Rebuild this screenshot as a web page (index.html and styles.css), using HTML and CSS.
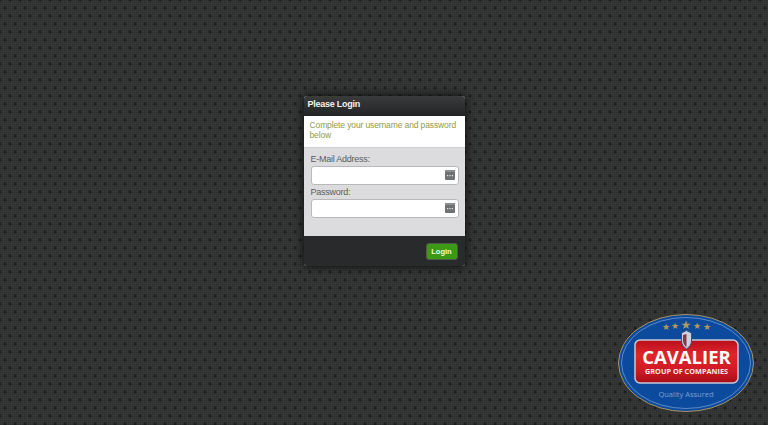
FILE: index.html
```html
<!DOCTYPE html>
<html lang="en">
<head>
<meta charset="utf-8">
<title>Please Login</title>
<link rel="stylesheet" href="styles.css">
</head>
<body>
<main class="page">
  <section class="panel">
    <header class="panel-head">Please Login</header>
    <p class="panel-note">Complete your username and password below</p>
    <form class="panel-form">
      <label class="field-label" for="email">E-Mail Address:</label>
      <div class="field">
        <input class="field-input" id="email" type="text">
        <svg class="field-icon" viewBox="0 0 10 10"><rect width="10" height="10" rx="1" fill="#6f7173"/><rect y="0" width="10" height="2" fill="#8b8d8f"/><rect x="2" y="5" width="1.2" height="1.2" fill="#e8e8e8"/><rect x="4.4" y="5" width="1.2" height="1.2" fill="#e8e8e8"/><rect x="6.8" y="5" width="1.2" height="1.2" fill="#e8e8e8"/></svg>
      </div>
      <label class="field-label" for="password">Password:</label>
      <div class="field">
        <input class="field-input" id="password" type="password">
        <svg class="field-icon" viewBox="0 0 10 10"><rect width="10" height="10" rx="1" fill="#6f7173"/><rect y="0" width="10" height="2" fill="#8b8d8f"/><rect x="2" y="5" width="1.2" height="1.2" fill="#e8e8e8"/><rect x="4.4" y="5" width="1.2" height="1.2" fill="#e8e8e8"/><rect x="6.8" y="5" width="1.2" height="1.2" fill="#e8e8e8"/></svg>
      </div>
    </form>
    <footer class="panel-foot"><button class="login" type="button">Login</button></footer>
  </section>
</main>
<svg class="badge" viewBox="0 0 138 100">
  <defs>
    <linearGradient id="red" x1="0" y1="0" x2="0" y2="1"><stop offset="0" stop-color="#b80f1c"/><stop offset="0.35" stop-color="#e0252c"/><stop offset="0.7" stop-color="#d01a24"/><stop offset="1" stop-color="#a80d18"/></linearGradient>
  </defs>
  <ellipse cx="68" cy="49" rx="67.500" ry="48.500" fill="#0c4a9e" stroke="#a8935f" stroke-width="1"/>
  <ellipse cx="68" cy="49" rx="64.500" ry="45.500" fill="none" stroke="#7ea6d8" stroke-width="0.700"/>
  <g fill="#b39a5c" font-family="'DejaVu Sans',sans-serif" text-anchor="middle">
    <text x="48" y="16" font-size="9">★</text>
    <text x="57" y="14.500" font-size="9">★</text>
    <text x="68" y="15" font-size="12">★</text>
    <text x="79" y="14.500" font-size="9">★</text>
    <text x="89" y="16" font-size="9">★</text>
  </g>
  <rect x="17" y="26" width="103" height="43" rx="5" fill="url(#red)" stroke="#c5ccd6" stroke-width="1.500"/>
  <path d="M63.500 19l5-2.500 5 2.500v8c0 3-2 6-5 8-3-2-5-5-5-8z" fill="#c9d2e0" stroke="#3d4f74" stroke-width="1"/>
  <path d="M68.500 20v13c-2-1.500-3.500-4-3.500-6v-6z" fill="#8c3448"/>
  <text class="badge-name" x="68.500" y="49.500" text-anchor="middle">CAVALIER</text>
  <text class="badge-sub" x="68.500" y="59.500" text-anchor="middle">GROUP OF COMPANIES</text>
  <text class="badge-tag" x="68" y="83" text-anchor="middle">Quality Assured</text>
</svg>
</body>
</html>
```
FILE: styles.css
```css
* { box-sizing: border-box; }
html, body { height: 100%; }
body {
  margin: 0;
  overflow: hidden;
  position: relative;
  font-family: "Liberation Sans", Arial, sans-serif;
  background-color: #383a39;
  background-image:
    radial-gradient(circle at 50% 50%, #1c1d1d 0, #1c1d1d 1.2px, transparent 1.8px),
    radial-gradient(circle at 50% 50%, #1c1d1d 0, #1c1d1d 1.2px, transparent 1.8px),
    repeating-linear-gradient(0deg, rgba(0,0,0,.09) 0 1px, transparent 1px 2px),
    repeating-linear-gradient(90deg, rgba(0,0,0,.09) 0 1px, transparent 1px 2px);
  background-size: 10px 16px, 10px 16px, auto, auto;
  background-position: 0 0, 5px 8px, 0 0, 0 0;
}
.page { display: flex; justify-content: center; padding-top: 96px; }
.panel {
  width: 161px;
  height: 170px;
  display: flex;
  flex-direction: column;
  background: #dcdcde;
  border-radius: 3px;
  box-shadow: 0 0 10px rgba(0,0,0,.85);
  overflow: hidden;
}
.panel-head {
  height: 20px;
  padding: 1px 4px;
  font-size: 9px;
  letter-spacing: -.25px;
  line-height: 15px;
  font-weight: 700;
  color: #f2f2f2;
  background: linear-gradient(#3a3b3c, #232425);
}
.panel-note {
  margin: 0;
  height: 32px;
  padding: 4px 4px 4px 6px;
  font-size: 8.500px;
  letter-spacing: -.12px;
  line-height: 10px;
  color: #8f9a4c;
  background: #fff;
  border-bottom: 1px solid #cfcfcf;
}
.panel-form { flex: 1; padding: 4px 6px 0 7px; }
.field-label { display: block; font-size: 9px; letter-spacing: -.25px; line-height: 14px; color: #5c5c5c; }
.field { position: relative; height: 19px; }
.field-input {
  display: block;
  width: 100%;
  height: 100%;
  border: 1px solid #b9b9b9;
  border-radius: 3px;
  background: #fff;
  outline: 0;
}
.field-icon { position: absolute; right: 4px; top: 4px; width: 10px; height: 10px; }
.panel-foot {
  height: 30px;
  display: flex;
  justify-content: flex-end;
  align-items: center;
  padding-right: 7px;
  background: #292a2b;
}
.login {
  width: 32px;
  height: 17px;
  padding: 0;
  border: 1px solid #4f5a4c;
  border-radius: 3px;
  background: #3a9a14;
  color: #f4f9e8;
  font: 700 7.500px "Liberation Sans", Arial, sans-serif;
}
.badge { position: absolute; left: 618px; top: 314px; width: 138px; height: 100px; }
.badge-name { font: 700 18.500px "Open Sans", "Liberation Sans", sans-serif; fill: #fff; }
.badge-sub { font: 700 7.300px "Open Sans", "Liberation Sans", sans-serif; fill: #f3e8e8; }
.badge-tag { font: 400 7.500px "Open Sans", "Liberation Sans", sans-serif; fill: #7f9fcd; }
```
